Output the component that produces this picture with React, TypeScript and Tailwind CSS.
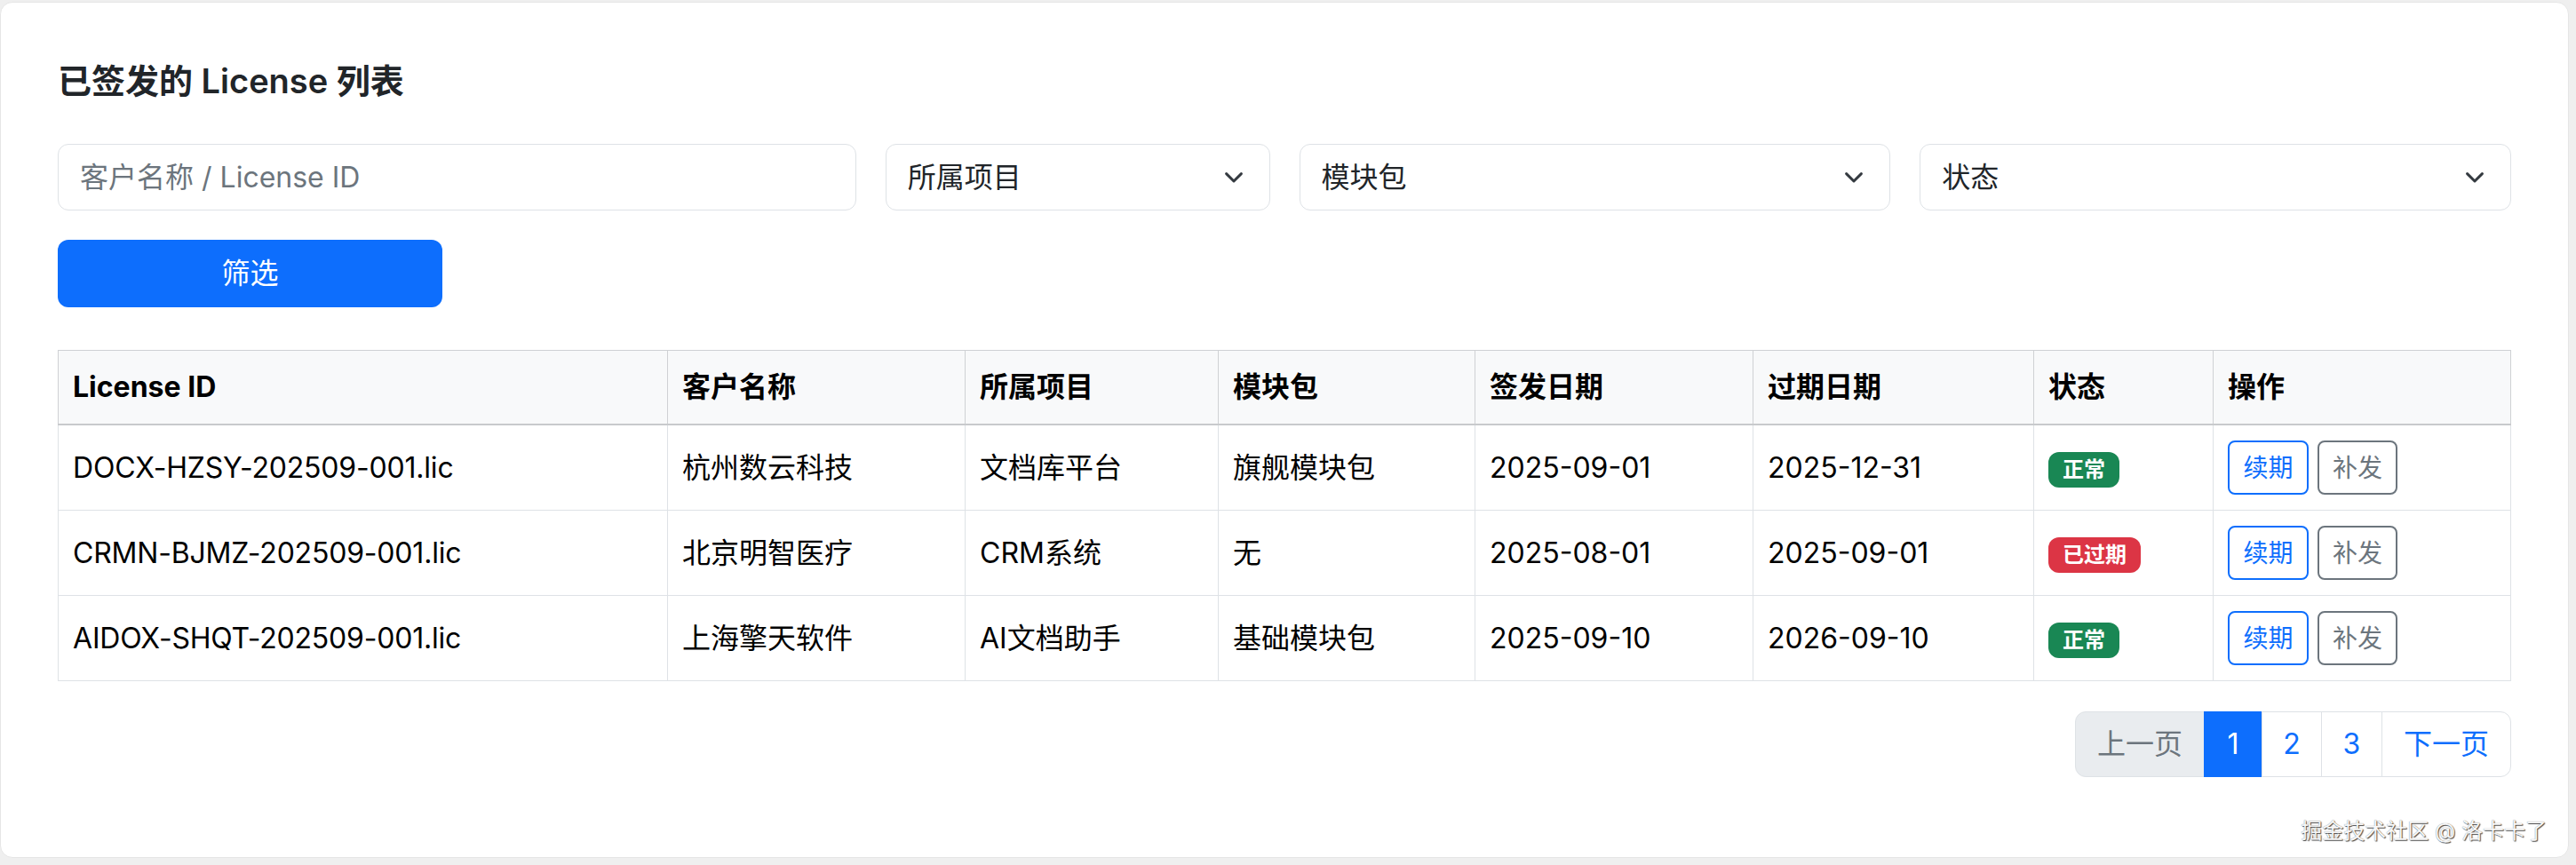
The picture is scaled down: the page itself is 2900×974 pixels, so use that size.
import React from "react";

type Row = {
  id: string;
  customer: string;
  project: string;
  pack: string;
  issued: string;
  expires: string;
  status: "ok" | "expired";
};

const rows: Row[] = [
  { id: "DOCX-HZSY-202509-001.lic", customer: "杭州数云科技", project: "文档库平台", pack: "旗舰模块包", issued: "2025-09-01", expires: "2025-12-31", status: "ok" },
  { id: "CRMN-BJMZ-202509-001.lic", customer: "北京明智医疗", project: "CRM系统", pack: "无", issued: "2025-08-01", expires: "2025-09-01", status: "expired" },
  { id: "AIDOX-SHQT-202509-001.lic", customer: "上海擎天软件", project: "AI文档助手", pack: "基础模块包", issued: "2025-09-10", expires: "2026-09-10", status: "ok" },
];

function Chevron() {
  return (
    <svg width="32" height="24" viewBox="0 0 16 12" fill="none" className="shrink-0">
      <path d="M3.8 3.8 8 8l4.2-4.2" stroke="#343a40" strokeWidth="1.5" strokeLinecap="round" strokeLinejoin="round" />
    </svg>
  );
}

function SelectBox({ label, span }: { label: string; span: string }) {
  return (
    <div className={`${span} h-[75px] flex items-center justify-between pl-[24px] pr-[24px] border border-[#dee2e6] rounded-[12px] bg-white text-[32px] text-[#212529]`}>
      <span>{label}</span>
      <Chevron />
    </div>
  );
}

const th = "border border-[#cfd1d4] border-b-2 border-b-[#c8cacc] bg-[#f8f9fa] px-[16px] py-[17px] text-left font-bold leading-[48px] align-middle";
const td = "border border-[#dee2e6] px-[16px] py-[17px] leading-[48px] align-middle";

export default function App() {
  return (
    <div
      className="w-[2900px] h-[974px] bg-[#efefef] pt-[2px] pr-[8px] pb-[8px] overflow-hidden"
      style={{ fontFamily: 'Inter, "Noto Sans CJK SC", sans-serif' }}
    >
      <div className="relative h-full bg-white rounded-[14px] border border-[#e6e6e6] px-[64px] pt-[65px] text-[#212529]">
        <h5 className="text-[38px] font-semibold leading-[46px] mb-[48px]">已签发的 License 列表</h5>

        <div className="grid grid-cols-12 gap-[33px]">
          <div className="col-span-4 h-[75px] flex items-center px-[24px] border border-[#dee2e6] rounded-[12px] text-[32px] text-[#6c757d]">
            客户名称 / License ID
          </div>
          <SelectBox label="所属项目" span="col-span-2" />
          <SelectBox label="模块包" span="col-span-3" />
          <SelectBox label="状态" span="col-span-3" />
          <button className="col-span-2 h-[76px] rounded-[12px] bg-[#0d6efd] text-white text-[32px] flex items-center justify-center">
            筛选
          </button>
        </div>

        <table className="mt-[48px] w-full table-fixed border-collapse text-[32px] text-[#000]">
          <thead>
            <tr>
              <th className={`${th} w-[686px]`}>License ID</th>
              <th className={`${th} w-[335px]`}>客户名称</th>
              <th className={`${th} w-[285px]`}>所属项目</th>
              <th className={`${th} w-[289px]`}>模块包</th>
              <th className={`${th} w-[313px]`}>签发日期</th>
              <th className={`${th} w-[316px]`}>过期日期</th>
              <th className={`${th} w-[202px]`}>状态</th>
              <th className={th}>操作</th>
            </tr>
          </thead>
          <tbody>
            {rows.map((r) => (
              <tr key={r.id}>
                <td className={`${td} tracking-[-0.2px]`}>{r.id}</td>
                <td className={td}>{r.customer}</td>
                <td className={td}>{r.project}</td>
                <td className={td}>{r.pack}</td>
                <td className={td}>{r.issued}</td>
                <td className={td}>{r.expires}</td>
                <td className={td}>
                  {r.status === "ok" ? (
                    <span className="inline-flex items-center h-[40px] px-[16px] rounded-[12px] bg-[#198754] text-white text-[24px] font-bold leading-none align-middle">
                      正常
                    </span>
                  ) : (
                    <span className="inline-flex items-center h-[40px] px-[16px] rounded-[12px] bg-[#dc3545] text-white text-[24px] font-bold leading-none align-middle">
                      已过期
                    </span>
                  )}
                </td>
                <td className={td}>
                  <div className="flex gap-[10px]">
                    <button className="h-[61px] w-[91px] rounded-[8px] border-2 border-[#0d6efd] text-[#0d6efd] text-[28px] flex items-center justify-center">
                      续期
                    </button>
                    <button className="h-[61px] w-[90px] rounded-[8px] border-2 border-[#6c757d] text-[#6c757d] text-[28px] flex items-center justify-center">
                      补发
                    </button>
                  </div>
                </td>
              </tr>
            ))}
          </tbody>
        </table>

        <nav className="mt-[34px] flex justify-end">
          <ul className="flex text-[32px] leading-[48px]">
            <li className="px-[24px] py-[12px] border border-[#dee2e6] rounded-l-[12px] bg-[#e9ecef] text-[#6c757d]">上一页</li>
            <li className="-ml-px w-[66px] flex justify-center py-[12px] border border-[#0d6efd] bg-[#0d6efd] text-white">1</li>
            <li className="-ml-px w-[68px] flex justify-center py-[12px] border border-[#dee2e6] bg-white text-[#0d6efd]">2</li>
            <li className="-ml-px w-[69px] flex justify-center py-[12px] border border-[#dee2e6] bg-white text-[#0d6efd]">3</li>
            <li className="-ml-px px-[24px] py-[12px] border border-[#dee2e6] rounded-r-[12px] bg-white text-[#0d6efd]">下一页</li>
          </ul>
        </nav>

        <div
          className="absolute right-[24px] bottom-[14px] text-[24px] leading-[30px] text-[#f7f7f7]"
          style={{ textShadow: "1px 1px 1px #4a4a4a, 0 0 1px #7a7a7a" }}
        >
          掘金技术社区 @ 洛卡卡了
        </div>
      </div>
    </div>
  );
}
